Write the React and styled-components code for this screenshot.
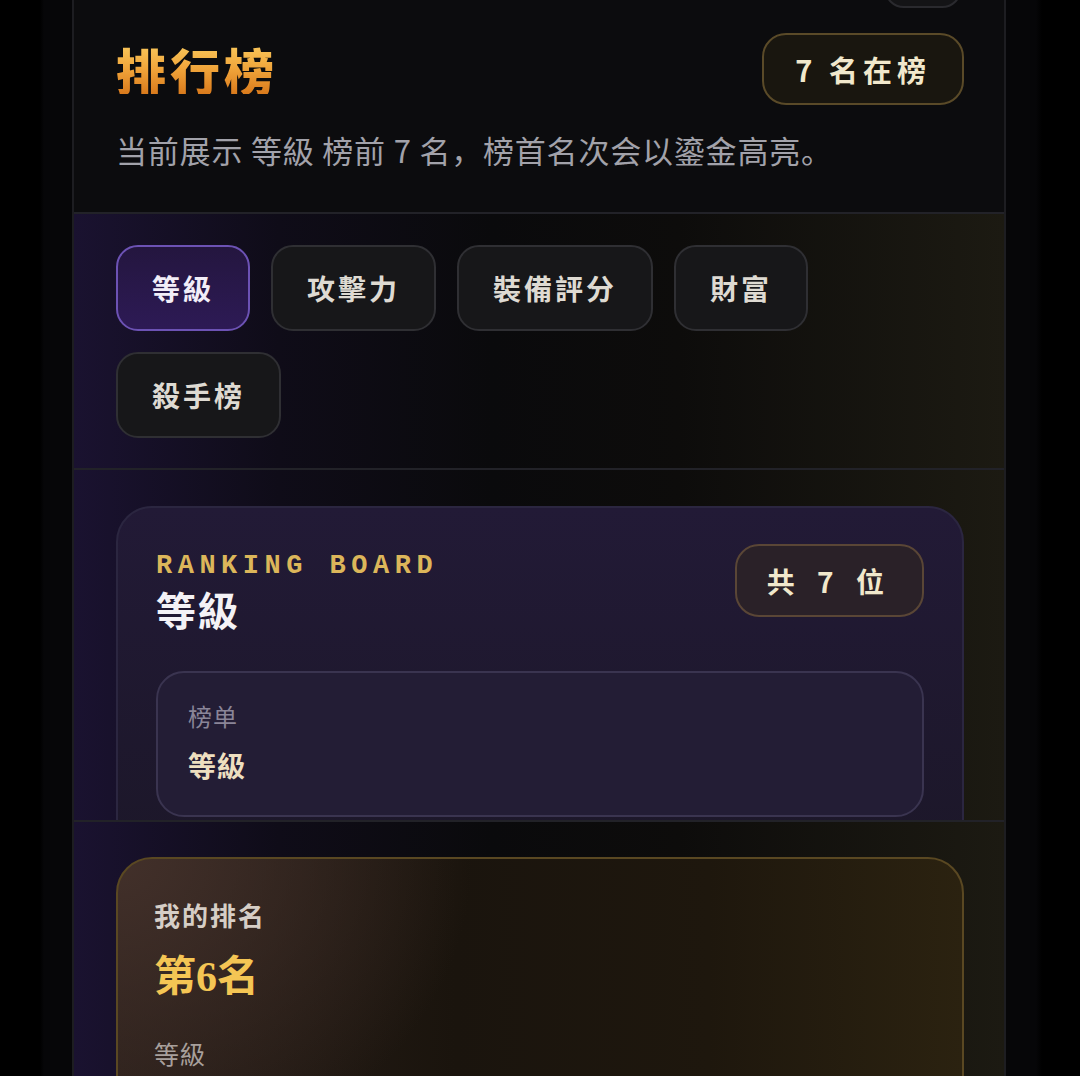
import styled, { createGlobalStyle } from "styled-components";

const GlobalStyle = createGlobalStyle`
  html, body {
    margin: 0;
    padding: 0;
    background: #000;
  }
  body {
    font-family: "Noto Sans CJK SC", "Noto Sans", sans-serif;
  }
`;

const Screen = styled.div`
  width: 1080px;
  height: 1076px;
  overflow: hidden;
  background: linear-gradient(90deg, #000 0, #000 40px, #060608 44px, #060608 1036px, #000 1042px);
`;

const Panel = styled.div`
  width: 930px;
  height: 1076px;
  margin: 0 0 0 72px;
  border-left: 2px solid #1d1d21;
  border-right: 2px solid #1d1d21;
  background: #0c0c0e;
  display: flex;
  flex-direction: column;
  overflow: hidden;
`;

const Section = styled.section`
  padding: 0 40px 0 42px;
  border-bottom: 2px solid #222228;
  flex-shrink: 0;
  ${(p) => p.$height && `height: ${p.$height}px; overflow: hidden; box-sizing: border-box;`}
  background: ${(p) =>
    p.$tint
      ? "linear-gradient(90deg, #1a1230 0%, #0f0c18 22%, #0a0a0c 45%, #0d0c0b 65%, #1c1a12 100%)"
      : "#0c0c0e"};
`;

const Remnant = styled.div`
  display: flex;
  justify-content: flex-end;
  margin-top: -54px;
  margin-right: 2px;
`;

const RemnantPill = styled.div`
  width: 74px;
  height: 58px;
  border-radius: 20px;
  border: 2px solid #2a2a2e;
  background: #141416;
`;

const HeaderRow = styled.div`
  display: flex;
  align-items: center;
  justify-content: space-between;
  height: 72px;
  margin-top: 25px;
`;

const Title = styled.h1`
  margin: 0;
  font-size: 50px;
  font-weight: 900;
  letter-spacing: 4px;
  line-height: 1;
  background: linear-gradient(180deg, #f9c85c 0%, #f0a43a 50%, #d97a1c 100%);
  -webkit-background-clip: text;
  background-clip: text;
  color: transparent;
`;

const Badge = styled.div`
  display: flex;
  align-items: center;
  justify-content: center;
  height: ${(p) => p.$h || 72}px;
  padding: 0 ${(p) => p.$px || 32}px;
  box-sizing: border-box;
  border-radius: 24px;
  border: 2px solid ${(p) => p.$border || "#5a4a28"};
  background: ${(p) => p.$bg || "#19160f"};
  color: #f1e8cc;
  font-size: ${(p) => p.$fs || 28}px;
  font-weight: 700;
  letter-spacing: ${(p) => p.$ls || 4}px;
  white-space: pre;
`;

const Description = styled.p`
  margin: 25px 0 0;
  padding-bottom: 42px;
  font-size: 31px;
  line-height: 40px;
  color: #a2a2aa;
  letter-spacing: 0.8px;
`;

const TabWrap = styled.div`
  display: flex;
  flex-wrap: wrap;
  gap: 21px;
  padding: 31px 0 30px;
`;

const Tab = styled.button`
  height: 86px;
  padding: 0 34px;
  border-radius: 22px;
  font-family: inherit;
  font-size: 28px;
  font-weight: 700;
  letter-spacing: 3px;
  color: ${(p) => (p.$active ? "#f2eef8" : "#dedad2")};
  border: 2px solid ${(p) => (p.$active ? "#6c52b4" : "#2f2f33")};
  background: ${(p) =>
    p.$active ? "linear-gradient(180deg, #24163f 0%, #2d1a55 100%)" : "#171719"};
  cursor: pointer;
`;

const BoardCard = styled.div`
  margin-top: 36px;
  border-radius: 36px;
  border: 2px solid #2b2640;
  background: linear-gradient(180deg, #221a36 0%, #1c1729 100%);
  padding: 36px 38px 40px;
`;

const BoardHead = styled.div`
  display: flex;
  justify-content: space-between;
  align-items: flex-start;
`;

const Eyebrow = styled.div`
  font-family: "Liberation Mono", "DejaVu Sans Mono", monospace;
  font-weight: 700;
  font-size: 27px;
  letter-spacing: 5.5px;
  color: #dcb65a;
  line-height: 44px;
`;

const BoardTitle = styled.div`
  font-size: 40px;
  font-weight: 700;
  color: #f4f2f6;
  letter-spacing: 2px;
  line-height: 42px;
`;

const InfoBox = styled.div`
  margin-top: 41px;
  border-radius: 28px;
  border: 2px solid #3a3450;
  background: #231d35;
  padding: 26px 30px 30px;
  height: 146px;
  box-sizing: border-box;
`;

const InfoLabel = styled.div`
  font-size: 24px;
  line-height: 34px;
  color: #8a8598;
  letter-spacing: 1px;
`;

const InfoValue = styled.div`
  margin-top: 14px;
  font-size: 28px;
  font-weight: 700;
  line-height: 36px;
  color: #eedfc0;
  letter-spacing: 1px;
`;

const MineCard = styled.div`
  margin-top: 35px;
  border-radius: 36px;
  border: 2px solid #5a4822;
  background:
    radial-gradient(ellipse 60% 90% at 0% 0%, #42302a 0%, rgba(66, 48, 42, 0) 70%),
    linear-gradient(90deg, #2a1f1a 0%, #1a140d 40%, #1e170d 70%, #2b2210 100%);
  padding: 36px 36px 60px;
  height: 400px;
`;

const MineLabel = styled.div`
  font-size: 26px;
  font-weight: 700;
  line-height: 40px;
  color: #d6cec6;
  letter-spacing: 2px;
`;

const MineRank = styled.div`
  margin-top: 15px;
  font-family: "Liberation Serif", "Noto Sans CJK SC", serif;
  font-size: 42px;
  font-weight: 700;
  line-height: 54px;
  color: #f4c554;
`;

const MineSub = styled.div`
  margin-top: 32px;
  font-size: 25px;
  line-height: 34px;
  color: #a8a09c;
  letter-spacing: 1px;
`;

const tabs = ["等級", "攻擊力", "裝備評分", "財富", "殺手榜"];

export default function App() {
  return (
    <>
      <GlobalStyle />
      <Screen>
        <Panel>
          <Section>
            <Remnant>
              <RemnantPill />
            </Remnant>
            <HeaderRow>
              <Title>排行榜</Title>
              <Badge $px={31} $fs={29} $ls={5}>{"7 名在榜"}</Badge>
            </HeaderRow>
            <Description>当前展示 等級 榜前 7 名，榜首名次会以鎏金高亮。</Description>
          </Section>

          <Section $tint>
            <TabWrap>
              {tabs.map((t, i) => (
                <Tab key={t} $active={i === 0}>
                  {t}
                </Tab>
              ))}
            </TabWrap>
          </Section>

          <Section $tint $height={352}>
            <BoardCard>
              <BoardHead>
                <div>
                  <Eyebrow>RANKING BOARD</Eyebrow>
                  <BoardTitle>等級</BoardTitle>
                </div>
                <Badge $h={73} $px={30} $ls={8} $bg="#2a2128" $border="#5a4636">
                  {"共 7 位"}
                </Badge>
              </BoardHead>
              <InfoBox>
                <InfoLabel>榜单</InfoLabel>
                <InfoValue>等級</InfoValue>
              </InfoBox>
            </BoardCard>
          </Section>

          <Section $tint>
            <MineCard>
              <MineLabel>我的排名</MineLabel>
              <MineRank>第6名</MineRank>
              <MineSub>等級</MineSub>
            </MineCard>
          </Section>
        </Panel>
      </Screen>
    </>
  );
}
